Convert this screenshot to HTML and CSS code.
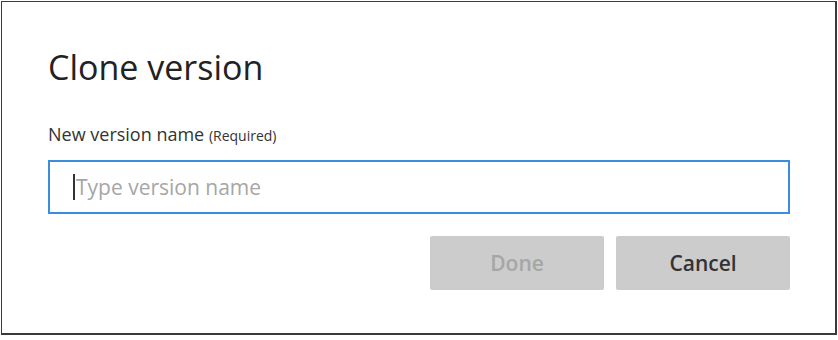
FILE: index.html
```html
<!DOCTYPE html>
<html lang="en">

<head>
    <meta charset="UTF-8">
    <meta name="viewport" content="width=device-width, initial-scale=1.0">
    <title>Clone version</title>
    <link rel="stylesheet" href="styles.css">
</head>

<body>
    <div class="dialog">
        <h1 class="title">Clone version</h1>
        <label class="label" for="name">New version name <small>(Required)</small></label>
        <div class="field">
            <span class="caret"></span>
            <input type="text" id="name" class="input" placeholder="Type version name">
        </div>
        <div class="actions">
            <button class="btn btn-done" disabled>Done</button>
            <button class="btn btn-cancel">Cancel</button>
        </div>
    </div>
</body>

</html>
```

FILE: styles.css
```css
body {
    margin: 0;
    padding: 1px;
    background-color: #fff;
    font-family: "Open Sans", "Noto Sans", sans-serif;
}

.dialog {
    box-sizing: border-box;
    width: 836px;
    height: 334px;
    padding: 42px 46px 0 46px;
    border: 1px solid #3a3a3a;
    border-right-width: 2px;
    border-bottom-width: 2px;
    background-color: #fff;
}

.title {
    margin: 0;
    font-size: 34px;
    font-weight: 400;
    line-height: 46px;
    color: #222;
}

.label {
    display: block;
    margin-top: 32px;
    font-size: 18px;
    line-height: 24px;
    color: #333;
}

.label small {
    font-size: 14px;
}

.field {
    display: flex;
    align-items: center;
    box-sizing: border-box;
    width: 742px;
    height: 54px;
    margin-top: 12px;
    padding-left: 23px;
    border: 2px solid #3b8ddd;
}

.caret {
    width: 2px;
    height: 26px;
    background-color: #333;
}

.input {
    flex: 1;
    border: none;
    outline: none;
    padding: 0 0 0 1px;
    font-family: inherit;
    font-size: 21px;
    color: #333;
}

.input::placeholder {
    color: #a6a6a6;
}

.actions {
    display: flex;
    justify-content: flex-end;
    gap: 12px;
    width: 742px;
    margin-top: 22px;
}

.btn {
    width: 174px;
    height: 54px;
    border: none;
    border-radius: 2px;
    background-color: #cccccc;
    font-family: inherit;
    font-size: 21px;
    font-weight: 600;
}

.btn-done {
    color: #a6a6a6;
}

.btn-cancel {
    color: #333;
}
```
